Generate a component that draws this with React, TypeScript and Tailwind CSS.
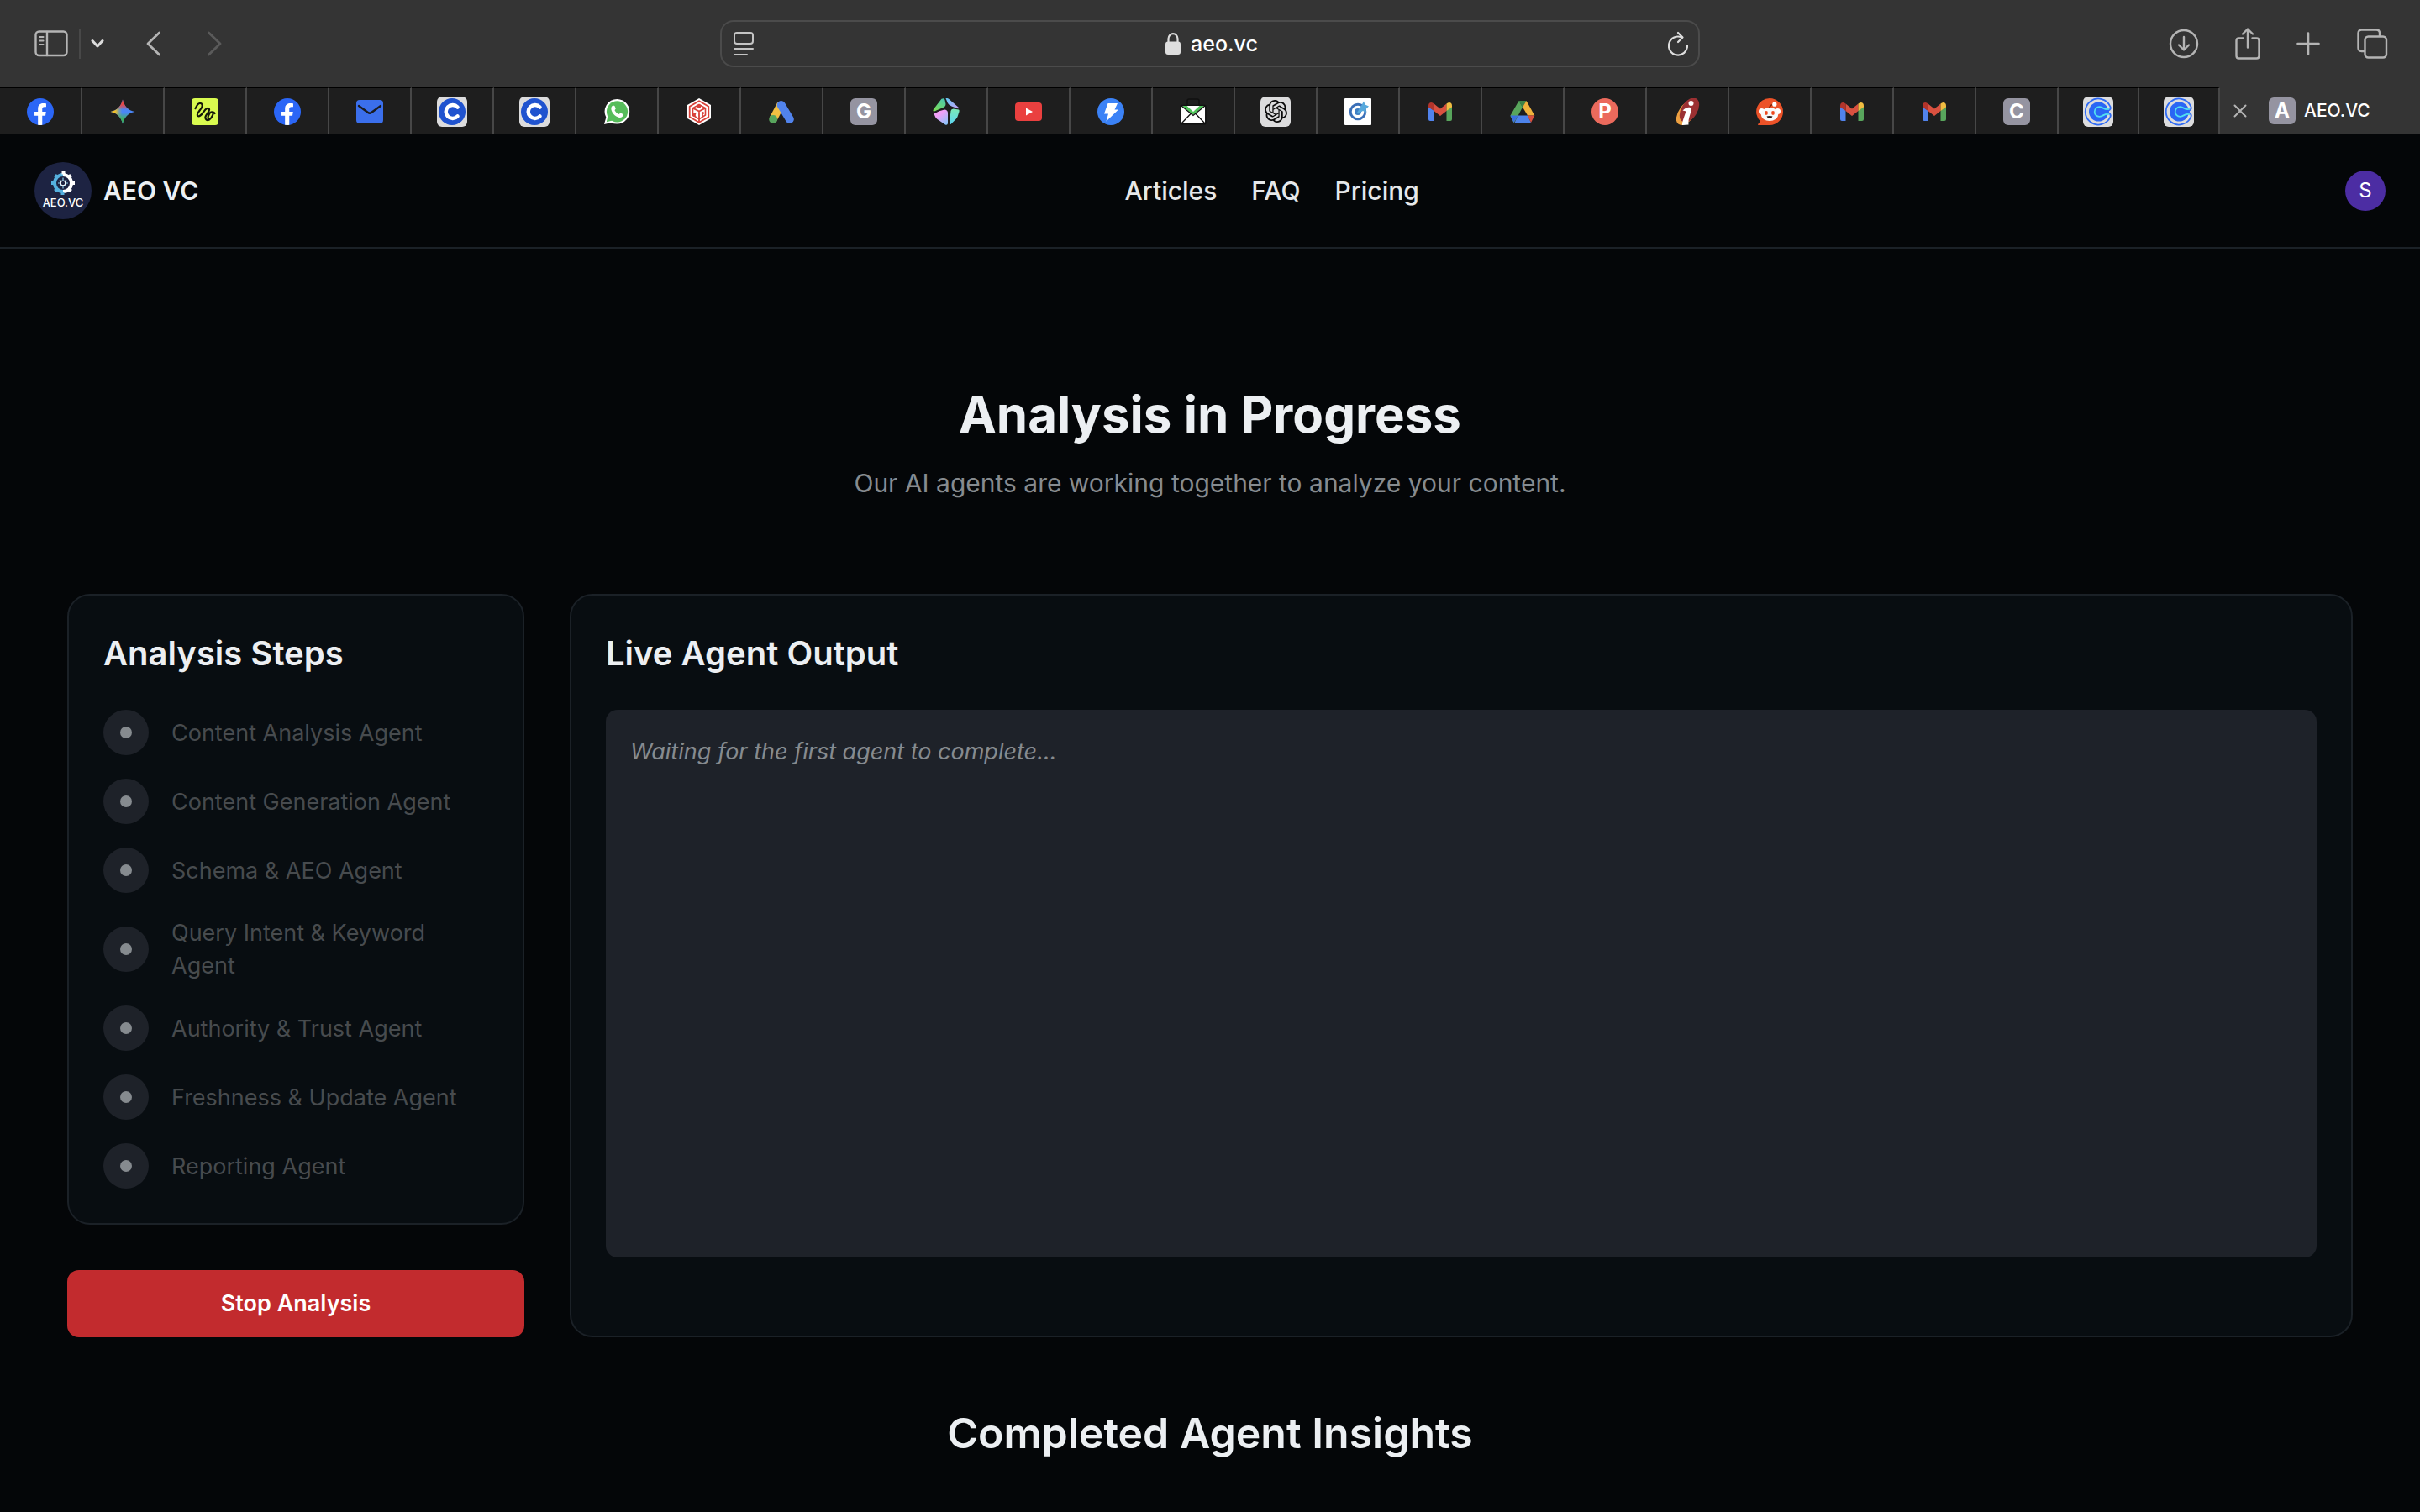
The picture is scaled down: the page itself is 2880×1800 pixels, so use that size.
import { useState } from "react";
import type { ReactNode } from "react";
import clsx from "clsx";
import { FaFacebookF } from "react-icons/fa";
import { SiOpenai } from "react-icons/si";

const steps = [
  "Content Analysis Agent",
  "Content Generation Agent",
  "Schema & AEO Agent",
  "Query Intent & Keyword Agent",
  "Authority & Trust Agent",
  "Freshness & Update Agent",
  "Reporting Agent",
];

function FacebookIcon() {
  return (
    <span className="flex size-8 items-end justify-center overflow-hidden rounded-full bg-[#2b66f6]">
      <FaFacebookF className="h-[26px] w-[18px] text-white" />
    </span>
  );
}

function GeminiIcon() {
  return (
    <svg viewBox="0 0 32 32" className="size-8">
      <defs>
        <linearGradient id="gem-top" x1="0" y1="0" x2="0" y2="1">
          <stop offset="0" stopColor="#ea4335" />
          <stop offset="0.22" stopColor="#e5484a" />
          <stop offset="0.42" stopColor="#e5484a" stopOpacity="0" />
        </linearGradient>
        <linearGradient id="gem-left" x1="0" y1="0" x2="1" y2="0">
          <stop offset="0" stopColor="#fbbc04" />
          <stop offset="0.2" stopColor="#f0c030" />
          <stop offset="0.48" stopColor="#9ab850" stopOpacity="0" />
        </linearGradient>
        <linearGradient id="gem-bottom" x1="0" y1="1" x2="0" y2="0">
          <stop offset="0" stopColor="#34a853" />
          <stop offset="0.22" stopColor="#3fb065" />
          <stop offset="0.46" stopColor="#3fb065" stopOpacity="0" />
        </linearGradient>
      </defs>
      {["#4a86f5", "url(#gem-left)", "url(#gem-top)", "url(#gem-bottom)"].map((fill) => (
        <path
          key={fill}
          d="M16 1.5C17.5 9 22.500 14.500 30.500 16C22.500 17.500 17.500 23 16 30.500C14.500 23 9.500 17.500 1.500 16C9.500 14.500 14.500 9 16 1.500Z"
          fill={fill}
        />
      ))}
    </svg>
  );
}

function SquiggleIcon() {
  return (
    <svg viewBox="0 0 32 32" className="size-8">
      <rect width="32" height="32" rx="4" fill="#d9fb4f" />
      <path
        d="M4.500 12C6 10 6.500 6.500 9.500 6C13 5.500 13.500 9 11.500 12C9.500 15 6 17.500 7 20.500C8.500 23 12 19.500 14.500 16C16.500 13 19 10.500 20.800 12.500C22.500 15 17.500 18.500 16.500 22C16 25.500 18.500 27 21 25.500C24.500 23 27 17.500 24.500 16.500C21.500 16 18.500 22 20 25M25 16.500Q27 16.500 27.500 18"
        fill="none"
        stroke="#14180a"
        strokeWidth="2.2"
        strokeLinecap="round"
      />
    </svg>
  );
}

function BlueMailIcon() {
  return (
    <svg viewBox="0 0 32 32" className="size-8">
      <rect y="2" width="32" height="28" rx="4" fill="#3b6fec" />
      <path d="M3 9L14 17Q16 18.500 18 17L29 9" fill="none" stroke="#1b1c20" strokeWidth="2.4" strokeLinecap="round" />
    </svg>
  );
}

function RingCIcon() {
  return (
    <svg viewBox="0 0 36 36" className="size-9">
      <rect width="36" height="36" rx="6" fill="#dcdcdd" />
      <circle cx="18" cy="18" r="16" fill="#2053cf" />
      <path d="M24.500 12.500A8 8 0 1 0 24.500 23.500" fill="none" stroke="#fff" strokeWidth="4.5" strokeLinecap="round" />
    </svg>
  );
}

function WhatsAppIcon() {
  return (
    <svg viewBox="0 0 32 32" className="size-8">
      <path d="M16.500 1A14.800 14.800 0 1 1 9.500 28.900L1 31L3.300 22.800A14.800 14.800 0 0 1 16.500 1Z" fill="#fff" />
      <circle cx="16.5" cy="15.8" r="12.6" fill="#57bd5b" />
      <path d="M3.800 28.300L5.500 21L11 26.500Z" fill="#57bd5b" />
      <path
        d="M11.500 8.600L13.400 8.900L14.800 12.200L13.500 14.200C14.600 16.500 16.300 18.100 18.700 19L20.300 17.400L23.700 19.100C23.700 22 21.200 23.400 18.900 22.900C13.800 21.600 10.500 17.900 9.400 13.200C9.100 11.200 10 9.200 11.500 8.600Z"
        fill="#fff"
      />
    </svg>
  );
}

function HexCubeIcon() {
  return (
    <svg viewBox="0 0 32 32" className="size-8">
      <path d="M16 0L30 8V24L16 32L2 24V8Z" fill="#fff" />
      <g fill="none" stroke="#d8423a" strokeWidth="1.8" strokeLinejoin="round">
        <path d="M16 3.200L27.300 9.700V22.300L16 28.800L4.700 22.300V9.700Z" />
        <path d="M16 7.500L23.500 11.600V20L16 24.800L8.500 20V11.600Z" strokeWidth="1.6" />
        <path d="M8.500 11.600L16 15.500L23.500 11.600M16 15.500V28M16 8V12" />
        <path d="M8 20.500L12 18M20 22V17.500" />
      </g>
      <circle cx="16" cy="9.500" r="2.3" fill="#d8423a" />
      <circle cx="10" cy="20" r="2" fill="#d8423a" />
      <circle cx="20.500" cy="17.500" r="1.6" fill="#d8423a" />
    </svg>
  );
}

function AdsIcon() {
  return (
    <svg viewBox="0 0 32 32" className="size-8">
      <path d="M15.500 7L6 25" stroke="#f2bf42" strokeWidth="9.5" />
      <path d="M15.700 8L25.800 25" stroke="#5183ec" strokeWidth="10" strokeLinecap="round" />
      <circle cx="6.200" cy="25" r="5" fill="#58a55d" />
    </svg>
  );
}

function CrystalIcon() {
  return (
    <svg viewBox="0 0 32 32" className="size-8">
      <defs>
        <linearGradient id="cr-a" x1="0.8" y1="0" x2="0.2" y2="1">
          <stop offset="0" stopColor="#4cc8ae" />
          <stop offset="1" stopColor="#7bdd55" />
        </linearGradient>
        <linearGradient id="cr-b" x1="0" y1="0" x2="1" y2="1">
          <stop offset="0" stopColor="#62c8f5" />
          <stop offset="1" stopColor="#c9a0f5" />
        </linearGradient>
        <linearGradient id="cr-c" x1="0.2" y1="0" x2="0.9" y2="1">
          <stop offset="0.3" stopColor="#f2a0f8" />
          <stop offset="1" stopColor="#86c6fa" />
        </linearGradient>
        <linearGradient id="cr-d" x1="0.5" y1="0" x2="0.5" y2="1">
          <stop offset="0" stopColor="#7be8b4" />
          <stop offset="1" stopColor="#5cd6f5" />
        </linearGradient>
      </defs>
      <path d="M10.500 0.800Q14 -0.800 14.500 2L15.500 7Q15.500 9.500 13.500 10.500L2 15.500Q-0.500 16 1 13Z" fill="url(#cr-a)" />
      <path d="M15.500 0Q18 -0.500 20 1.500L31.500 11.500Q31 12.500 29 12L22.500 9.500Q19.500 8.500 18 6Z" fill="url(#cr-b)" />
      <path d="M1.500 18.500Q8 14.500 14 13.500Q17.500 13.500 18 17V30Q17.500 32.500 15 31.500L5.500 25Q3.500 23.500 3 22Z" fill="url(#cr-c)" />
      <path d="M21.500 15Q22 12.500 24.500 12.500L31 13.500Q32 14 31.500 16L29.500 22Q29 23.500 27.500 25L21.500 31Q19.800 31.500 20 29Z" fill="url(#cr-d)" />
    </svg>
  );
}

function YoutubeIcon() {
  return (
    <svg viewBox="0 0 32 32" className="size-8">
      <rect y="5" width="32" height="22" rx="4" fill="#ea403f" />
      <path d="M13 11.500L21 16L13 20.500Z" fill="#fff" />
    </svg>
  );
}

function BoltIcon() {
  return (
    <svg viewBox="0 0 32 32" className="size-8">
      <circle cx="16" cy="16" r="16" fill="#3b82f6" />
      <path d="M12.500 6H24L20.500 13.500H25L10.500 27.500L13 18.500H8Z" fill="#fff" />
    </svg>
  );
}

function EnvelopeIcon() {
  return (
    <svg viewBox="0 0 32 32" className="size-8">
      <path d="M9 8V3Q9 1 11 1H21Q23 1 23 3V8" fill="none" stroke="#101010" strokeWidth="1.5" />
      <rect x="1.200" y="8.500" width="29.600" height="22.300" rx="1" fill="#fff" stroke="#101010" strokeWidth="1.5" />
      <path d="M3 9H29L16 20Z" fill="#4fc45a" />
      <path d="M8.500 9H23.500L16 16Z" fill="#fff" />
      <path d="M2 9L16 20.500L30 9M2 30L13 18.500M30 30L19 18.500" fill="none" stroke="#101010" strokeWidth="1.3" />
    </svg>
  );
}

function OpenAiIcon() {
  return (
    <span className="flex size-9 items-center justify-center rounded-md bg-[#dcdcdd]">
      <SiOpenai className="size-[27px] text-[#0c0c0c]" />
    </span>
  );
}

function TargetIcon() {
  return (
    <svg viewBox="0 0 32 32" className="size-8">
      <rect width="32" height="32" rx="1" fill="#fff" />
      <circle cx="16" cy="16" r="8.800" fill="none" stroke="#3a6fb8" strokeWidth="3" />
      <circle cx="16" cy="16" r="4" fill="#3f7fc4" />
      <path d="M15 17L20 9L23 3.500L24.500 7.500L29 9.500L25.500 13L26 17L22 15L16 18.500Z" fill="#58a9dc" />
    </svg>
  );
}

function GmailIcon() {
  return (
    <svg viewBox="0 0 32 32" className="size-8">
      <path d="M2 10V25Q2 27 4 27H8.500V14.500Z" fill="#5183ec" />
      <path d="M30 10V25Q30 27 28 27H23.500V14.500Z" fill="#58a55c" />
      <path d="M8.500 6.500L16 12.500L23.500 6.500V15L16 21L8.500 15Z" fill="#d95140" />
      <path d="M2 9Q2 5 5.500 5Q7 5 8.500 6.500V15L2 10.500Z" fill="#b2342b" />
      <path d="M30 9Q30 5 26.500 5Q25 5 23.500 6.500V15L30 10.500Z" fill="#f1bd42" />
    </svg>
  );
}

function DriveIcon() {
  return (
    <svg viewBox="0 0 32 32" className="size-8">
      <path d="M11.500 3L16 10.500L7.500 26.500L5.500 29L1.800 22Q1.200 21 1.800 20Z" fill="#58a55c" />
      <path d="M11.500 3H20.500L16 11Z" fill="#3d8448" />
      <path d="M20.500 3L30.300 20.500H22L16 10.500Z" fill="#f1b33c" />
      <path d="M10.500 20.500H22L26 29H6.500Z" fill="#4d83ea" />
      <path d="M1.500 20.500H10.500L5.500 29Z" fill="#3b6fe0" />
      <path d="M22 20.500H30.300L26 29Z" fill="#d95140" />
    </svg>
  );
}

function IciciIcon() {
  return (
    <svg viewBox="0 0 32 32" className="size-8">
      <ellipse cx="15.500" cy="17" rx="9.500" ry="17" transform="rotate(36 15.500 17)" fill="#eda041" />
      <ellipse cx="18.500" cy="14" rx="9.500" ry="16" transform="rotate(32 18.500 14)" fill="#9c3032" />
      <circle cx="20.500" cy="6" r="3" fill="#fff" />
      <path d="M10.500 14.500C14 10.500 19 9.500 21 12C22 14 16.500 24 17.500 31.500L10 32C9.500 28 14 18 14.500 15.500Z" fill="#fff" />
    </svg>
  );
}

function RedditIcon() {
  return (
    <svg viewBox="0 0 32 32" className="size-8">
      <path d="M16 0A16 16 0 1 1 16 32H3Q1.500 32 2.500 30.500L5 27.500A16 16 0 0 1 16 0Z" fill="#ec5228" />
      <path d="M15.500 13Q15.500 8.500 20 7.500" fill="none" stroke="#842306" strokeWidth="1.5" />
      <circle cx="21.800" cy="7.200" r="2.6" fill="#fff" />
      <circle cx="6.500" cy="15.500" r="3.5" fill="#fff" />
      <circle cx="25.500" cy="15.500" r="3.5" fill="#fff" />
      <ellipse cx="16" cy="19" rx="10.3" ry="8" fill="#f7fafb" />
      <ellipse cx="12" cy="17.500" rx="1.9" ry="2.4" fill="#ee4a1f" />
      <ellipse cx="20" cy="17.500" rx="1.9" ry="2.4" fill="#ee4a1f" />
      <path d="M12.500 21.500Q16 20.700 19.500 21.500Q18.500 24 16 24Q13.500 24 12.500 21.500Z" fill="#2a1410" />
    </svg>
  );
}

function CalendlyIcon() {
  return (
    <svg viewBox="0 0 36 36" className="size-9">
      <rect width="36" height="36" rx="6" fill="#dcdcdd" />
      <path
        d="M32.500 12A15.500 15.500 0 1 0 32.500 24Q33.500 21.500 31 19.800Q29 18 31 16.200Q33.500 14.500 32.500 12Z"
        fill="none"
        stroke="#2f6bf6"
        strokeWidth="1.8"
      />
      <circle cx="18.500" cy="18" r="11.5" fill="#2a66f4" />
      <path d="M26 13L31 16L28.500 18L31 20L26 23L22 18Z" fill="#2a66f4" />
      <path
        d="M31 14.500C26 17 24.500 12.500 19.500 12.200A5.800 5.800 0 0 0 19.500 23.800C24.500 23.500 26 19 31 21.500"
        fill="none"
        stroke="#51dff0"
        strokeWidth="1.8"
      />
    </svg>
  );
}

function LetterIcon({ letter }: { letter: string }) {
  return (
    <span className="flex size-8 items-center justify-center rounded-md bg-[#9594a1] text-2xl leading-8 font-bold text-white">
      {letter}
    </span>
  );
}

function ProductIcon() {
  return (
    <span className="flex size-8 items-center justify-center rounded-full bg-[#eb6a5c] text-2xl leading-8 font-bold text-white">
      P
    </span>
  );
}

const tabs: { name: string; icon: ReactNode }[] = [
  { name: "Facebook", icon: <FacebookIcon /> },
  { name: "Gemini", icon: <GeminiIcon /> },
  { name: "Notes", icon: <SquiggleIcon /> },
  { name: "Facebook", icon: <FacebookIcon /> },
  { name: "Mail", icon: <BlueMailIcon /> },
  { name: "C", icon: <RingCIcon /> },
  { name: "C", icon: <RingCIcon /> },
  { name: "WhatsApp", icon: <WhatsAppIcon /> },
  { name: "Hex", icon: <HexCubeIcon /> },
  { name: "Google Ads", icon: <AdsIcon /> },
  { name: "G", icon: <LetterIcon letter="G" /> },
  { name: "Crystal", icon: <CrystalIcon /> },
  { name: "YouTube", icon: <YoutubeIcon /> },
  { name: "Bolt", icon: <BoltIcon /> },
  { name: "Temp mail", icon: <EnvelopeIcon /> },
  { name: "ChatGPT", icon: <OpenAiIcon /> },
  { name: "Target", icon: <TargetIcon /> },
  { name: "Gmail", icon: <GmailIcon /> },
  { name: "Drive", icon: <DriveIcon /> },
  { name: "Product", icon: <ProductIcon /> },
  { name: "ICICI", icon: <IciciIcon /> },
  { name: "Reddit", icon: <RedditIcon /> },
  { name: "Gmail", icon: <GmailIcon /> },
  { name: "Gmail", icon: <GmailIcon /> },
  { name: "C", icon: <LetterIcon letter="C" /> },
  { name: "Calendly", icon: <CalendlyIcon /> },
  { name: "Calendly", icon: <CalendlyIcon /> },
];

function Toolbar() {
  const [url, setUrl] = useState("aeo.vc");

  return (
    <div className="grid h-[104px] grid-cols-[147fr_200fr_147fr] items-center bg-[#343434] text-[#b4b4b4]">
      <div className="flex items-center pl-[41px]">
        <button aria-label="Sidebar">
          <svg viewBox="0 0 40 32" className="h-8 w-10" fill="none" stroke="currentColor" strokeWidth="2.4" strokeLinecap="round">
            <rect x="1.500" y="1.500" width="37" height="28.500" rx="4" />
            <path d="M15 2V30" />
            <path d="M6 8H10.500M6 12.500H10.500M6 17H10.500" strokeWidth="2" />
          </svg>
        </button>
        <span className="ml-[13px] h-9 w-[2px] bg-[#484848]" />
        <button aria-label="Tab groups" className="ml-3">
          <svg viewBox="0 0 16 12" className="h-3 w-4" fill="none" stroke="#dcdcdc" strokeWidth="3" strokeLinecap="round" strokeLinejoin="round">
            <path d="M2 2.500L8 9L14 2.500" />
          </svg>
        </button>
        <button aria-label="Back" className="ml-[50px]">
          <svg viewBox="0 0 18 30" className="h-[30px] w-[18px]" fill="none" stroke="currentColor" strokeWidth="2.8" strokeLinecap="round" strokeLinejoin="round">
            <path d="M15.500 2L2 15L15.500 28" />
          </svg>
        </button>
        <button aria-label="Forward" className="ml-[54px]">
          <svg viewBox="0 0 18 30" className="h-[30px] w-[18px]" fill="none" stroke="#5a5a5a" strokeWidth="2.8" strokeLinecap="round" strokeLinejoin="round">
            <path d="M2.500 2L16 15L2.500 28" />
          </svg>
        </button>
      </div>

      <div className="flex h-14 items-center justify-between rounded-2xl border-2 border-[#4b4b4b] px-3">
        <button aria-label="Reader" className="px-[2px]">
          <svg viewBox="0 0 24 30" className="h-[30px] w-6" fill="none" stroke="#c4c4c4" strokeWidth="2" strokeLinecap="round">
            <rect x="1" y="2" width="22" height="13" rx="3" />
            <path d="M1 21H23M1 28H16" />
          </svg>
        </button>
        <div className="flex items-center gap-3">
          <svg viewBox="0 0 18 26" className="h-[26px] w-[18px]">
            <path d="M3.500 12V7A5.500 5.800 0 0 1 14.500 7V12" fill="none" stroke="#dedede" strokeWidth="2.2" />
            <rect y="10.500" width="18" height="15.500" rx="3" fill="#dedede" />
          </svg>
          <input
            aria-label="Address"
            value={url}
            onChange={(e) => setUrl(e.target.value)}
            className="field-sizing-content bg-transparent text-[25px] leading-8 font-medium text-white outline-none"
          />
        </div>
        <button aria-label="Reload">
          <svg viewBox="0 0 24 30" className="h-[30px] w-6" fill="none" stroke="#dedede" strokeWidth="2.2" strokeLinecap="round" strokeLinejoin="round">
            <path d="M23 17.500A11 11 0 1 1 16.500 7.500" />
            <path d="M12 2L17.500 7.500L12 13" />
          </svg>
        </button>
      </div>

      <div className="flex items-center justify-end gap-[43px] pr-[38px]">
        <button aria-label="Downloads">
          <svg viewBox="0 0 36 36" className="size-9" fill="none" stroke="currentColor" strokeWidth="2.4" strokeLinecap="round" strokeLinejoin="round">
            <circle cx="18" cy="18" r="16" />
            <path d="M18 10V25M12 19.500L18 25.500L24 19.500" />
          </svg>
        </button>
        <button aria-label="Share">
          <svg viewBox="0 0 30 38" className="h-[38px] w-[30px]" fill="none" stroke="currentColor" strokeWidth="2.4" strokeLinecap="round" strokeLinejoin="round">
            <path d="M9.500 12.500H4.500Q1.500 12.500 1.500 15.500V33.500Q1.500 36.500 4.500 36.500H25.500Q28.500 36.500 28.500 33.500V15.500Q28.500 12.500 25.500 12.500H20.500" />
            <path d="M15 23.500V2M9 7.500L15 1.500L21 7.500" />
          </svg>
        </button>
        <button aria-label="New tab">
          <svg viewBox="0 0 28 28" className="size-7" fill="none" stroke="currentColor" strokeWidth="2.6" strokeLinecap="round">
            <path d="M14 1.500V26.500M1.500 14H26.500" />
          </svg>
        </button>
        <button aria-label="Tab overview">
          <svg viewBox="0 0 38 36" className="h-9 w-[38px]" fill="none" stroke="currentColor" strokeWidth="2.4" strokeLinejoin="round">
            <rect x="10.500" y="9.500" width="25.500" height="25" rx="4" />
            <path d="M10 27H6.500Q2.500 27 2.500 23V5.500Q2.500 1.500 6.500 1.500H24Q28 1.500 28 5.500V9" />
          </svg>
        </button>
      </div>
    </div>
  );
}

function TabStrip() {
  return (
    <div role="tablist" className="flex h-14 bg-[#343434]">
      {tabs.map((tab, i) => (
        <button
          key={i}
          role="tab"
          aria-selected={false}
          aria-label={tab.name}
          className={clsx(
            "flex items-center justify-center border-t border-r-2 border-t-black border-r-[#474747] bg-[#1e1e1e]",
            i < tabs.length - 2 ? "flex-[98]" : "flex-[96]"
          )}
        >
          {tab.icon}
        </button>
      ))}
      <div className="flex w-[238px] shrink-0 items-center pl-4">
        <button aria-label="Close tab">
          <svg viewBox="0 0 16 16" className="size-4" fill="none" stroke="#b4b4b4" strokeWidth="2" strokeLinecap="round">
            <path d="M1.500 1.500L14.500 14.500M14.500 1.500L1.500 14.500" />
          </svg>
        </button>
        <button role="tab" aria-selected className="ml-[26px] flex items-center gap-[10px]">
          <LetterIcon letter="A" />
          <span className="text-[21px] leading-8 font-medium text-white">AEO.VC</span>
        </button>
      </div>
    </div>
  );
}

function Logo() {
  return (
    <span className="flex size-[68px] flex-col items-center rounded-full bg-[#1d2342] pt-[10px]">
      <svg viewBox="0 0 30 30" className="size-[30px]">
        <g fill="none" strokeWidth="4">
          <path d="M15 5A10 10 0 0 0 15 25" stroke="#55b0df" />
          <path d="M15 5A10 10 0 0 1 15 25" stroke="#fff" />
        </g>
        <path d="M4.500 15H1M8 8L5.500 5.500M8 22L5.500 24.500M14.500 25.500V29" stroke="#55b0df" strokeWidth="4" />
        <path d="M25.500 15H29M22 8L24.500 5.500M22 22L24.500 24.500M15.500 4.500V1" stroke="#fff" strokeWidth="4" />
        <circle cx="15" cy="15" r="2.8" fill="none" stroke="#fff" strokeWidth="1.2" />
        <path d="M15 8.500V12M15 18V21.500M18 15H21M9 15H12M11 11L13 13M19 11L17 13M11 19L13 17M19 19L17 17" stroke="#8ccbe8" strokeWidth="1.2" />
      </svg>
      <span className="text-[13px] leading-4 font-medium text-white">AEO.VC</span>
    </span>
  );
}

function Header() {
  return (
    <header className="flex h-[136px] items-center justify-between border-b-2 border-[#1b2127] px-[41px]">
      <a href="#home" className="flex items-center gap-[14px] text-[30px] leading-10 font-semibold">
        <Logo />
        AEO VC
      </a>
      <nav className="flex gap-[41px] text-[30px] leading-10 font-medium text-[#e6e8ea]">
        <a href="#articles">Articles</a>
        <a href="#faq">FAQ</a>
        <a href="#pricing">Pricing</a>
      </nav>
      <button className="size-12 rounded-full bg-[#4c2da3] text-2xl leading-8 text-white">S</button>
    </header>
  );
}

export default function App() {
  const [stopped, setStopped] = useState(false);

  return (
    <div className="min-h-dvh bg-[#040608] font-[Inter,'Liberation_Sans',sans-serif] text-[#eceff2]">
      <Toolbar />
      <TabStrip />
      <Header />

      <main className="px-20 pt-[163px]">
        <div className="text-center">
          <h1 className="text-[60px] leading-[68px] font-bold">Analysis in Progress</h1>
          <p className="mt-6 text-[30px] leading-[48px] text-[#868b8f]">
            Our AI agents are working together to analyze your content.
          </p>
        </div>

        <div className="mt-[108px] flex gap-[54px]">
          <div className="flex w-1/5 shrink-0 flex-col gap-[54px]">
            <section className="rounded-[27px] border-2 border-[#1b2127] bg-[#080d11] p-[41px]">
              <h2 className="text-[40px] leading-[55px] font-semibold">Analysis Steps</h2>
              <ol className="mt-10 flex flex-col gap-7">
                {steps.map((step) => (
                  <li key={step} className="flex items-center gap-[27px]">
                    <span className="flex size-[54px] shrink-0 items-center justify-center rounded-full bg-[#1e2229]">
                      <span className="size-[14px] rounded-full bg-[#868b8f]" />
                    </span>
                    <span className="text-[27px] leading-[39px] text-[#474b4e]">{step}</span>
                  </li>
                ))}
              </ol>
            </section>
            <button
              onClick={() => setStopped(true)}
              disabled={stopped}
              className="h-20 rounded-[14px] bg-[#c22b2e] text-[27px] leading-10 font-semibold text-white"
            >
              Stop Analysis
            </button>
          </div>

          <section className="flex-1 rounded-[27px] border-2 border-[#1b2127] bg-[#080d11] p-[41px]">
            <h2 className="text-[40px] leading-[55px] font-semibold">Live Agent Output</h2>
            <div className="mt-10 h-[652px] rounded-[14px] bg-[#1e2229] p-[29px]">
              <p className="text-[27px] leading-[42px] text-[#868b8f] italic">
                Waiting for the first agent to complete...
              </p>
            </div>
          </section>
        </div>

        <h2 className="mt-[83px] pb-8 text-center text-[50px] leading-[62px] font-semibold">
          Completed Agent Insights
        </h2>
      </main>
    </div>
  );
}
